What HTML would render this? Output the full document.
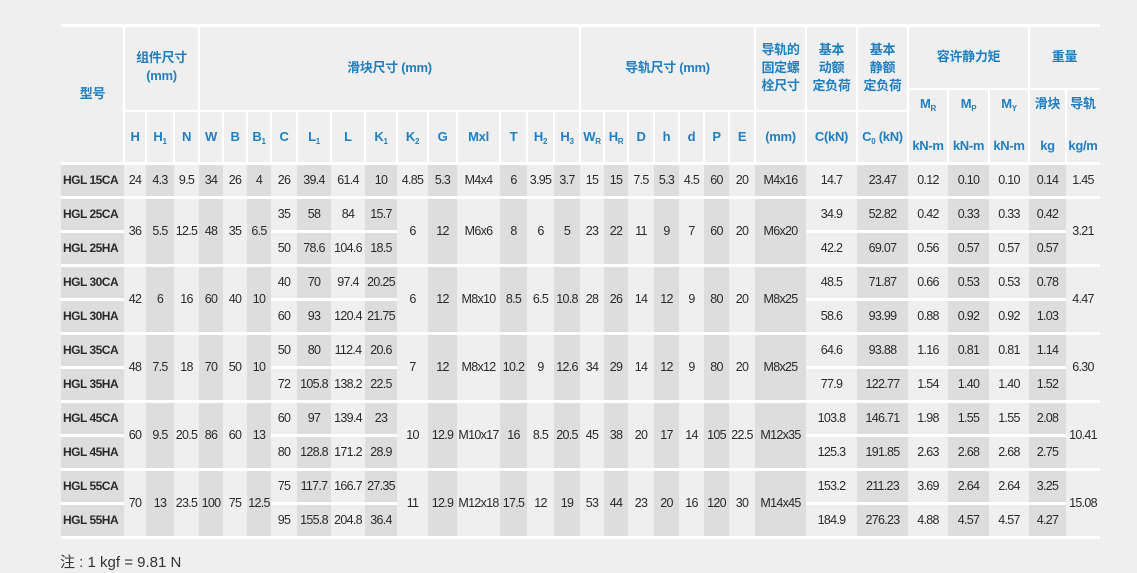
<!DOCTYPE html>
<html><head><meta charset="utf-8">
<style>
*{margin:0;padding:0;box-sizing:content-box}
body{width:1137px;height:573px;background:#efefef;position:relative;overflow:hidden;font-family:"Liberation Sans","Noto Sans CJK SC",sans-serif;color:#222}
.h{position:absolute;color:#1f7fc0;font-family:"Liberation Sans","Noto Sans CJK SC",sans-serif;font-size:13px;font-weight:bold;text-align:center;line-height:18px;letter-spacing:-0.3px}
.h sub{font-size:8px;vertical-align:-3px}
.ln{position:absolute;background:#fff}
table{position:absolute;left:61px;top:165px;width:1039px;table-layout:fixed;border-collapse:separate;border-spacing:0}
td{height:31px;padding:0;line-height:31px;border-bottom:3px solid #fff;text-align:center;font-size:12.5px;letter-spacing:-0.7px;white-space:nowrap;overflow:visible;color:#2a2a2a}
td.m{text-align:left;padding-left:2px;font-weight:bold;font-size:12px;letter-spacing:-0.5px}
col.d{background:#dcdddc}
.note{position:absolute;left:60px;top:551px;font-size:15px;color:#333;font-family:"Liberation Sans","Noto Sans CJK SC",sans-serif}
</style></head><body>

<div class="ln" style="left:61px;top:24px;width:1039px;height:3px"></div>
<div class="ln" style="left:124px;top:110px;width:784px;height:2px"></div>
<div class="ln" style="left:908px;top:88px;width:192px;height:2px"></div>
<div class="ln" style="left:61px;top:162px;width:1039px;height:3px"></div>
<div class="ln" style="left:123px;top:27px;width:2px;height:135px"></div>
<div class="ln" style="left:198px;top:27px;width:2px;height:135px"></div>
<div class="ln" style="left:579px;top:27px;width:2px;height:135px"></div>
<div class="ln" style="left:754px;top:27px;width:2px;height:135px"></div>
<div class="ln" style="left:805px;top:27px;width:2px;height:135px"></div>
<div class="ln" style="left:856px;top:27px;width:2px;height:135px"></div>
<div class="ln" style="left:907px;top:27px;width:2px;height:135px"></div>
<div class="ln" style="left:1028px;top:27px;width:2px;height:135px"></div>
<div class="ln" style="left:947px;top:90px;width:2px;height:72px"></div>
<div class="ln" style="left:988px;top:90px;width:2px;height:72px"></div>
<div class="ln" style="left:1065px;top:90px;width:2px;height:72px"></div>
<div class="ln" style="left:145px;top:112px;width:2px;height:50px"></div>
<div class="ln" style="left:173px;top:112px;width:2px;height:50px"></div>
<div class="ln" style="left:222px;top:112px;width:2px;height:50px"></div>
<div class="ln" style="left:246px;top:112px;width:2px;height:50px"></div>
<div class="ln" style="left:270px;top:112px;width:2px;height:50px"></div>
<div class="ln" style="left:296px;top:112px;width:2px;height:50px"></div>
<div class="ln" style="left:330px;top:112px;width:2px;height:50px"></div>
<div class="ln" style="left:364px;top:112px;width:2px;height:50px"></div>
<div class="ln" style="left:396px;top:112px;width:2px;height:50px"></div>
<div class="ln" style="left:427px;top:112px;width:2px;height:50px"></div>
<div class="ln" style="left:456px;top:112px;width:2px;height:50px"></div>
<div class="ln" style="left:499px;top:112px;width:2px;height:50px"></div>
<div class="ln" style="left:526px;top:112px;width:2px;height:50px"></div>
<div class="ln" style="left:553px;top:112px;width:2px;height:50px"></div>
<div class="ln" style="left:603px;top:112px;width:2px;height:50px"></div>
<div class="ln" style="left:627px;top:112px;width:2px;height:50px"></div>
<div class="ln" style="left:653px;top:112px;width:2px;height:50px"></div>
<div class="ln" style="left:678px;top:112px;width:2px;height:50px"></div>
<div class="ln" style="left:703px;top:112px;width:2px;height:50px"></div>
<div class="ln" style="left:728px;top:112px;width:2px;height:50px"></div>

<div class="h" style="left:61px;top:85px;width:63px">型号</div>
<div class="h" style="left:124px;top:49px;width:75px">组件尺寸<br>(mm)</div>
<div class="h" style="left:199px;top:59px;width:381px">滑块尺寸 (mm)</div>
<div class="h" style="left:580px;top:59px;width:175px">导轨尺寸 (mm)</div>
<div class="h" style="left:755px;top:41px;width:51px">导轨的<br>固定螺<br>栓尺寸</div>
<div class="h" style="left:806px;top:41px;width:51px">基本<br>动额<br>定负荷</div>
<div class="h" style="left:857px;top:41px;width:51px">基本<br>静额<br>定负荷</div>
<div class="h" style="left:908px;top:48px;width:121px">容许静力矩</div>
<div class="h" style="left:1029px;top:48px;width:71px">重量</div>
<div class="h" style="left:908px;top:95px;width:40px">M<sub>R</sub></div>
<div class="h" style="left:948px;top:95px;width:41px">M<sub>P</sub></div>
<div class="h" style="left:989px;top:95px;width:40px">M<sub>Y</sub></div>
<div class="h" style="left:1029px;top:95px;width:37px">滑块</div>
<div class="h" style="left:1066px;top:95px;width:34px">导轨</div>
<div class="h" style="left:908px;top:137px;width:40px">kN-m</div>
<div class="h" style="left:948px;top:137px;width:41px">kN-m</div>
<div class="h" style="left:989px;top:137px;width:40px">kN-m</div>
<div class="h" style="left:1029px;top:137px;width:37px">kg</div>
<div class="h" style="left:1066px;top:137px;width:34px">kg/m</div>

<div class="h" style="left:124px;top:128px;width:22px">H</div>
<div class="h" style="left:146px;top:128px;width:28px">H<sub>1</sub></div>
<div class="h" style="left:174px;top:128px;width:25px">N</div>
<div class="h" style="left:199px;top:128px;width:24px">W</div>
<div class="h" style="left:223px;top:128px;width:24px">B</div>
<div class="h" style="left:247px;top:128px;width:24px">B<sub>1</sub></div>
<div class="h" style="left:271px;top:128px;width:26px">C</div>
<div class="h" style="left:297px;top:128px;width:34px">L<sub>1</sub></div>
<div class="h" style="left:331px;top:128px;width:34px">L</div>
<div class="h" style="left:365px;top:128px;width:32px">K<sub>1</sub></div>
<div class="h" style="left:397px;top:128px;width:31px">K<sub>2</sub></div>
<div class="h" style="left:428px;top:128px;width:29px">G</div>
<div class="h" style="left:457px;top:128px;width:43px">Mxl</div>
<div class="h" style="left:500px;top:128px;width:27px">T</div>
<div class="h" style="left:527px;top:128px;width:27px">H<sub>2</sub></div>
<div class="h" style="left:554px;top:128px;width:26px">H<sub>3</sub></div>
<div class="h" style="left:580px;top:128px;width:24px">W<sub>R</sub></div>
<div class="h" style="left:604px;top:128px;width:24px">H<sub>R</sub></div>
<div class="h" style="left:628px;top:128px;width:26px">D</div>
<div class="h" style="left:654px;top:128px;width:25px">h</div>
<div class="h" style="left:679px;top:128px;width:25px">d</div>
<div class="h" style="left:704px;top:128px;width:25px">P</div>
<div class="h" style="left:729px;top:128px;width:26px">E</div>
<div class="h" style="left:755px;top:128px;width:51px">(mm)</div>
<div class="h" style="left:806px;top:128px;width:51px">C(kN)</div>
<div class="h" style="left:857px;top:128px;width:51px">C<sub>0</sub> (kN)</div>

<table>
<colgroup>
<col class="d" style="width:63px"><col style="width:22px"><col class="d" style="width:28px"><col style="width:25px"><col class="d" style="width:24px"><col style="width:24px"><col class="d" style="width:24px"><col style="width:26px"><col class="d" style="width:34px"><col style="width:34px"><col class="d" style="width:32px"><col style="width:31px"><col class="d" style="width:29px"><col style="width:43px"><col class="d" style="width:27px"><col style="width:27px"><col class="d" style="width:26px"><col style="width:24px"><col class="d" style="width:24px"><col style="width:26px"><col class="d" style="width:25px"><col style="width:25px"><col class="d" style="width:25px"><col style="width:26px"><col class="d" style="width:51px"><col style="width:51px"><col class="d" style="width:51px"><col style="width:40px"><col class="d" style="width:41px"><col style="width:40px"><col class="d" style="width:37px"><col style="width:34px">
</colgroup>
<tr><td class="m">HGL 15CA</td><td>24</td><td>4.3</td><td>9.5</td><td>34</td><td>26</td><td>4</td><td>26</td><td>39.4</td><td>61.4</td><td>10</td><td>4.85</td><td>5.3</td><td>M4x4</td><td>6</td><td>3.95</td><td>3.7</td><td>15</td><td>15</td><td>7.5</td><td>5.3</td><td>4.5</td><td>60</td><td>20</td><td>M4x16</td><td>14.7</td><td>23.47</td><td>0.12</td><td>0.10</td><td>0.10</td><td>0.14</td><td>1.45</td></tr>

<tr><td class="m">HGL 25CA</td><td rowspan="2">36</td><td rowspan="2">5.5</td><td rowspan="2">12.5</td><td rowspan="2">48</td><td rowspan="2">35</td><td rowspan="2">6.5</td><td>35</td><td>58</td><td>84</td><td>15.7</td><td rowspan="2">6</td><td rowspan="2">12</td><td rowspan="2">M6x6</td><td rowspan="2">8</td><td rowspan="2">6</td><td rowspan="2">5</td><td rowspan="2">23</td><td rowspan="2">22</td><td rowspan="2">11</td><td rowspan="2">9</td><td rowspan="2">7</td><td rowspan="2">60</td><td rowspan="2">20</td><td rowspan="2">M6x20</td><td>34.9</td><td>52.82</td><td>0.42</td><td>0.33</td><td>0.33</td><td>0.42</td><td rowspan="2">3.21</td></tr>
<tr><td class="m">HGL 25HA</td><td>50</td><td>78.6</td><td>104.6</td><td>18.5</td><td>42.2</td><td>69.07</td><td>0.56</td><td>0.57</td><td>0.57</td><td>0.57</td></tr>

<tr><td class="m">HGL 30CA</td><td rowspan="2">42</td><td rowspan="2">6</td><td rowspan="2">16</td><td rowspan="2">60</td><td rowspan="2">40</td><td rowspan="2">10</td><td>40</td><td>70</td><td>97.4</td><td>20.25</td><td rowspan="2">6</td><td rowspan="2">12</td><td rowspan="2">M8x10</td><td rowspan="2">8.5</td><td rowspan="2">6.5</td><td rowspan="2">10.8</td><td rowspan="2">28</td><td rowspan="2">26</td><td rowspan="2">14</td><td rowspan="2">12</td><td rowspan="2">9</td><td rowspan="2">80</td><td rowspan="2">20</td><td rowspan="2">M8x25</td><td>48.5</td><td>71.87</td><td>0.66</td><td>0.53</td><td>0.53</td><td>0.78</td><td rowspan="2">4.47</td></tr>
<tr><td class="m">HGL 30HA</td><td>60</td><td>93</td><td>120.4</td><td>21.75</td><td>58.6</td><td>93.99</td><td>0.88</td><td>0.92</td><td>0.92</td><td>1.03</td></tr>

<tr><td class="m">HGL 35CA</td><td rowspan="2">48</td><td rowspan="2">7.5</td><td rowspan="2">18</td><td rowspan="2">70</td><td rowspan="2">50</td><td rowspan="2">10</td><td>50</td><td>80</td><td>112.4</td><td>20.6</td><td rowspan="2">7</td><td rowspan="2">12</td><td rowspan="2">M8x12</td><td rowspan="2">10.2</td><td rowspan="2">9</td><td rowspan="2">12.6</td><td rowspan="2">34</td><td rowspan="2">29</td><td rowspan="2">14</td><td rowspan="2">12</td><td rowspan="2">9</td><td rowspan="2">80</td><td rowspan="2">20</td><td rowspan="2">M8x25</td><td>64.6</td><td>93.88</td><td>1.16</td><td>0.81</td><td>0.81</td><td>1.14</td><td rowspan="2">6.30</td></tr>
<tr><td class="m">HGL 35HA</td><td>72</td><td>105.8</td><td>138.2</td><td>22.5</td><td>77.9</td><td>122.77</td><td>1.54</td><td>1.40</td><td>1.40</td><td>1.52</td></tr>

<tr><td class="m">HGL 45CA</td><td rowspan="2">60</td><td rowspan="2">9.5</td><td rowspan="2">20.5</td><td rowspan="2">86</td><td rowspan="2">60</td><td rowspan="2">13</td><td>60</td><td>97</td><td>139.4</td><td>23</td><td rowspan="2">10</td><td rowspan="2">12.9</td><td rowspan="2">M10x17</td><td rowspan="2">16</td><td rowspan="2">8.5</td><td rowspan="2">20.5</td><td rowspan="2">45</td><td rowspan="2">38</td><td rowspan="2">20</td><td rowspan="2">17</td><td rowspan="2">14</td><td rowspan="2">105</td><td rowspan="2">22.5</td><td rowspan="2">M12x35</td><td>103.8</td><td>146.71</td><td>1.98</td><td>1.55</td><td>1.55</td><td>2.08</td><td rowspan="2">10.41</td></tr>
<tr><td class="m">HGL 45HA</td><td>80</td><td>128.8</td><td>171.2</td><td>28.9</td><td>125.3</td><td>191.85</td><td>2.63</td><td>2.68</td><td>2.68</td><td>2.75</td></tr>

<tr><td class="m">HGL 55CA</td><td rowspan="2">70</td><td rowspan="2">13</td><td rowspan="2">23.5</td><td rowspan="2">100</td><td rowspan="2">75</td><td rowspan="2">12.5</td><td>75</td><td>117.7</td><td>166.7</td><td>27.35</td><td rowspan="2">11</td><td rowspan="2">12.9</td><td rowspan="2">M12x18</td><td rowspan="2">17.5</td><td rowspan="2">12</td><td rowspan="2">19</td><td rowspan="2">53</td><td rowspan="2">44</td><td rowspan="2">23</td><td rowspan="2">20</td><td rowspan="2">16</td><td rowspan="2">120</td><td rowspan="2">30</td><td rowspan="2">M14x45</td><td>153.2</td><td>211.23</td><td>3.69</td><td>2.64</td><td>2.64</td><td>3.25</td><td rowspan="2">15.08</td></tr>
<tr><td class="m">HGL 55HA</td><td>95</td><td>155.8</td><td>204.8</td><td>36.4</td><td>184.9</td><td>276.23</td><td>4.88</td><td>4.57</td><td>4.57</td><td>4.27</td></tr>
</table>

<div class="note">注 : 1 kgf = 9.81 N</div>
</body></html>
